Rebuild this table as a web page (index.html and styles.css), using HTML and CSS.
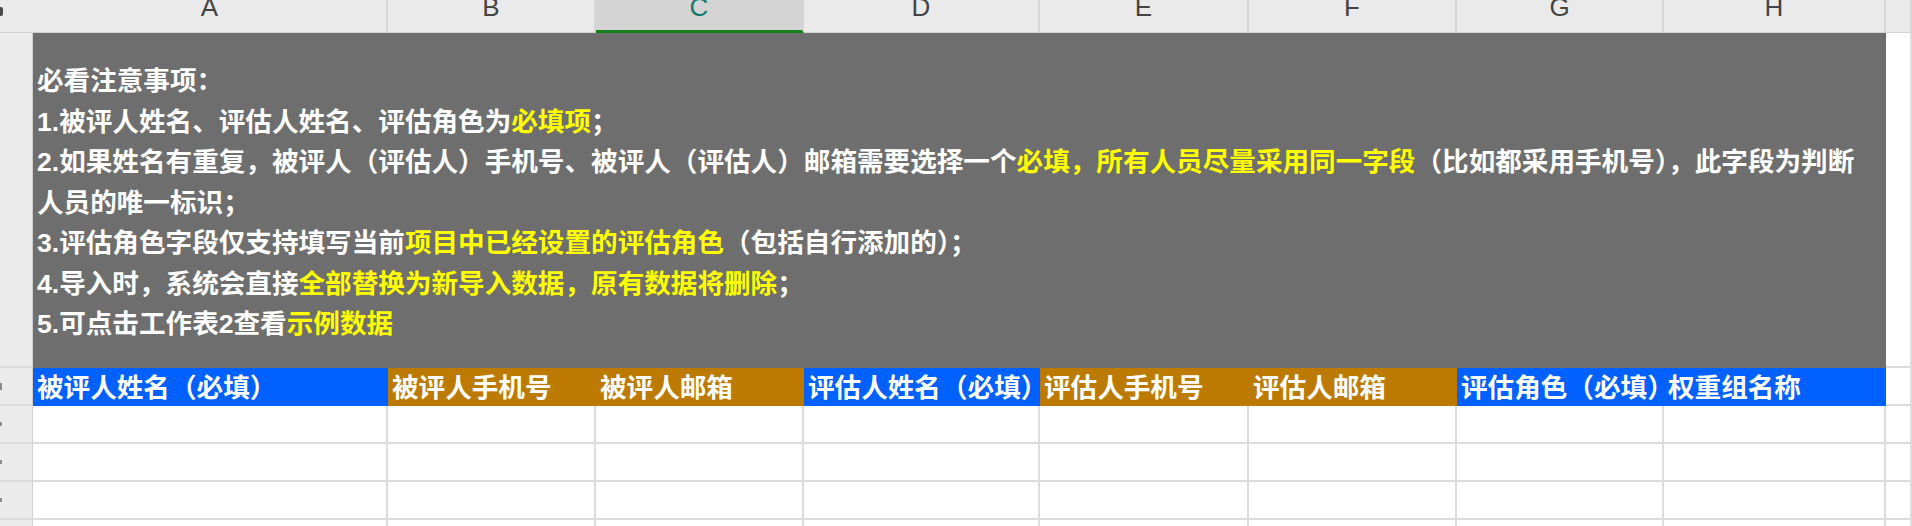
FILE: index.html
```html
<!DOCTYPE html>
<html lang="zh-CN">
<head>
<meta charset="utf-8">
<title>导入模板</title>
<link rel="stylesheet" href="styles.css">
</head>
<body>
<div class="sheet">
  <div class="corner"><span class="nub"></span></div>
  <div class="ch">A</div>
  <div class="ch">B</div>
  <div class="ch sel">C</div>
  <div class="ch">D</div>
  <div class="ch">E</div>
  <div class="ch">F</div>
  <div class="ch">G</div>
  <div class="ch">H</div>
  <div class="ch"></div>

  <div class="rh"></div>
  <div class="notice">
    <div class="ln">必看注意事项：</div>
    <div class="ln">1.被评人姓名、评估人姓名、评估角色为<span class="hl">必填项</span>；</div>
    <div class="ln">2.如果姓名有重复，被评人（评估人）手机号、被评人（评估人）邮箱需要选择一个<span class="hl">必填，所有人员尽量采用同一字段</span>（比如都采用手机号），此字段为判断</div>
    <div class="ln">人员的唯一标识；</div>
    <div class="ln">3.评估角色字段仅支持填写当前<span class="hl">项目中已经设置的评估角色</span>（包括自行添加的）；</div>
    <div class="ln">4.导入时，系统会直接<span class="hl">全部替换为新导入数据，原有数据将删除</span>；</div>
    <div class="ln">5.可点击工作表2查看<span class="hl">示例数据</span></div>
  </div>
  <div class="cell"></div>

  <div class="rh"><span class="mark tall"></span></div>
  <div class="f blue">被评人姓名（必填）</div>
  <div class="f orange">被评人手机号</div>
  <div class="f orange">被评人邮箱</div>
  <div class="f blue">评估人姓名（必填）</div>
  <div class="f orange">评估人手机号</div>
  <div class="f orange">评估人邮箱</div>
  <div class="f blue">评估角色（必填）</div>
  <div class="f blue">权重组名称</div>
  <div class="cell"></div>

  <div class="rh"><span class="mark"></span></div>
  <div class="cell"></div><div class="cell"></div><div class="cell"></div><div class="cell"></div><div class="cell"></div><div class="cell"></div><div class="cell"></div><div class="cell"></div><div class="cell"></div>

  <div class="rh"><span class="mark"></span></div>
  <div class="cell"></div><div class="cell"></div><div class="cell"></div><div class="cell"></div><div class="cell"></div><div class="cell"></div><div class="cell"></div><div class="cell"></div><div class="cell"></div>

  <div class="rh"><span class="mark"></span></div>
  <div class="cell"></div><div class="cell"></div><div class="cell"></div><div class="cell"></div><div class="cell"></div><div class="cell"></div><div class="cell"></div><div class="cell"></div><div class="cell"></div>

  <div class="rh"><span class="mark"></span></div>
  <div class="cell"></div><div class="cell"></div><div class="cell"></div><div class="cell"></div><div class="cell"></div><div class="cell"></div><div class="cell"></div><div class="cell"></div><div class="cell"></div>
</div>
</body>
</html>
```

FILE: styles.css
```css
html, body {
  margin: 0;
  padding: 0;
}

body {
  width: 1912px;
  height: 526px;
  overflow: hidden;
  background: #ffffff;
  font-family: "Liberation Sans", "Noto Sans CJK SC", sans-serif;
}

.sheet {
  display: grid;
  grid-template-columns: 33px 355px 208px 208px 236px 209px 208px 207px 222px 1fr;
  grid-template-rows: 33px 335px 38px 38px 38px 38px 38px;
}

.sheet > div {
  box-sizing: border-box;
  min-width: 0;
}

.corner {
  background: #ebebeb;
  border-bottom: 1px solid #d2d2d2;
  padding-top: 7px;
}

.nub {
  display: block;
  width: 3px;
  height: 9px;
  background: #4a4a4a;
  border-radius: 0 2px 2px 0;
}

.ch {
  background: #eaeaea;
  border-right: 2px solid #d6d6d6;
  border-bottom: 1px solid #d2d2d2;
  color: #444444;
  font-size: 26px;
  line-height: 14px;
  text-align: center;
  overflow: hidden;
}

.ch.sel {
  background: #d4d4d4;
  color: #0e7a6a;
  border-bottom: 3px solid #14821a;
}

.rh {
  background: #ebebeb;
  border-right: 1px solid #d0d0d0;
  border-bottom: 2px solid #dcdcdc;
  display: flex;
  align-items: center;
}

.mark {
  display: block;
  width: 2px;
  height: 4px;
  background: #8a8a8a;
}

.mark.tall {
  height: 7px;
}

.notice {
  grid-column: 2 / 10;
  background: #6e6e6e;
  color: #ffffff;
  font-weight: 700;
  font-size: 26.6px;
  line-height: 40.5px;
  padding: 28px 4px 0 4px;
  white-space: nowrap;
  overflow: hidden;
}

.hl {
  color: #ffff00;
}

.cell {
  border-right: 2px solid #dcdcdc;
  border-bottom: 2px solid #dcdcdc;
}

.f {
  color: #ffffff;
  font-weight: 700;
  font-size: 26.6px;
  line-height: 35px;
  padding: 3px 0 0 4px;
  white-space: nowrap;
  overflow: hidden;
}

.blue {
  background: #0061fe;
}

.orange {
  background: #bd7a00;
}
```
